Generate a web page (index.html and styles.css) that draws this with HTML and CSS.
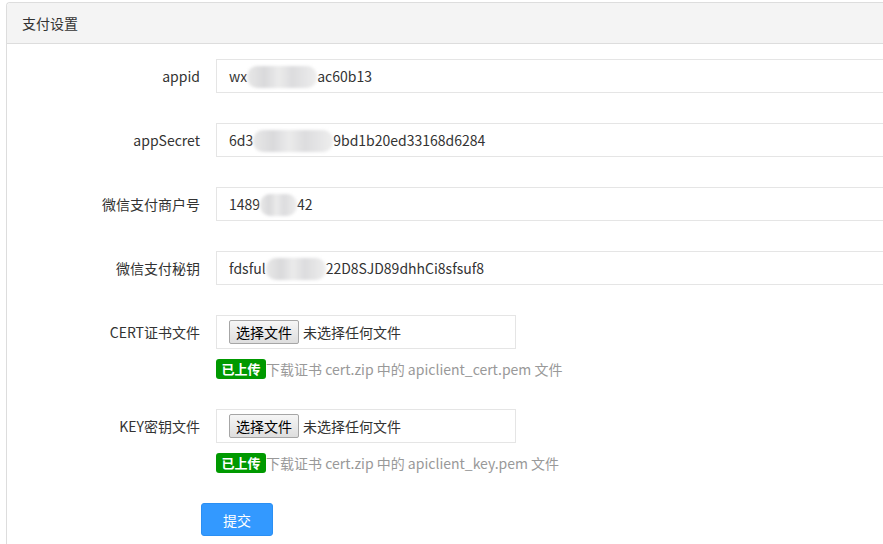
FILE: index.html
```html
<!DOCTYPE html>
<html lang="zh-CN">
<head>
<meta charset="utf-8">
<title>支付设置</title>
<link rel="stylesheet" href="styles.css">
</head>
<body>
<div class="page">
  <div class="panel">
    <div class="panel-head">支付设置</div>
    <div class="panel-body">
      <div class="row">
        <div class="label">appid</div>
        <div class="field"><div class="input">wx<span class="mask" style="width:70px"></span>ac60b13</div></div>
      </div>
      <div class="row">
        <div class="label">appSecret</div>
        <div class="field"><div class="input">6d3<span class="mask" style="width:80px"></span>9bd1b20ed33168d6284</div></div>
      </div>
      <div class="row">
        <div class="label">微信支付商户号</div>
        <div class="field"><div class="input">1489<span class="mask" style="width:37px"></span>42</div></div>
      </div>
      <div class="row">
        <div class="label">微信支付秘钥</div>
        <div class="field"><div class="input">fdsful<span class="mask" style="width:60px"></span>22D8SJD89dhhCi8sfsuf8</div></div>
      </div>
      <div class="row">
        <div class="label">CERT证书文件</div>
        <div class="field">
          <div class="filebox"><span class="filebtn">选择文件</span><span class="filename">未选择任何文件</span></div>
          <div class="help"><span class="badge">已上传</span>下载证书 cert.zip 中的 apiclient_cert.pem 文件</div>
        </div>
      </div>
      <div class="row">
        <div class="label">KEY密钥文件</div>
        <div class="field">
          <div class="filebox"><span class="filebtn">选择文件</span><span class="filename">未选择任何文件</span></div>
          <div class="help"><span class="badge">已上传</span>下载证书 cert.zip 中的 apiclient_key.pem 文件</div>
        </div>
      </div>
      <div class="actions"><button class="submit" type="button">提交</button></div>
    </div>
  </div>
</div>
</body>
</html>
```
FILE: styles.css
```css
html, body {
  margin: 0;
  padding: 0;
  background: #fff;
  overflow: hidden;
}
body {
  font-family: "Noto Sans CJK SC", "Noto Sans", sans-serif;
  font-size: 14px;
  color: #333;
}
.page {
  padding: 2px 0 0 6px;
  height: 542px;
  overflow: hidden;
}
.panel {
  width: 1000px;
  height: 600px;
  border: 1px solid #ddd;
  border-right: none;
  border-radius: 4px 0 0 0;
}
.panel-head {
  height: 40px;
  line-height: 40px;
  padding-left: 15px;
  background: #f4f4f4;
  border-bottom: 1px solid #ddd;
  border-radius: 4px 0 0 0;
}
.panel-body {
  padding-top: 15px;
}
.row {
  display: flex;
  margin-bottom: 30px;
}
.label {
  width: 193px;
  margin-right: 16px;
  text-align: right;
  line-height: 34px;
  height: 34px;
  flex: none;
}
.field {
  flex: 1;
}
.input {
  box-sizing: border-box;
  height: 34px;
  line-height: 32px;
  padding: 0 12px;
  border: 1px solid #e5e5e5;
  color: #333;
  white-space: nowrap;
}
.mask {
  display: inline-block;
  height: 22px;
  vertical-align: middle;
  margin-top: -3px;
  border-radius: 10px;
  background: linear-gradient(90deg, #e8e8e8 0%, #d9d9db 25%, #ebebeb 45%, #dcdcde 65%, #eeeeee 100%);
  filter: blur(1.5px);
}
.filebox {
  box-sizing: border-box;
  width: 300px;
  height: 34px;
  border: 1px solid #e5e5e5;
  padding: 6px 12px;
  display: flex;
  align-items: center;
}
.filebtn {
  box-sizing: border-box;
  height: 24px;
  line-height: 22px;
  padding: 0 6px;
  border: 1px solid #a6a6a6;
  border-radius: 2px;
  background: linear-gradient(#f6f6f6, #dedede);
  color: #000;
  margin-right: 4px;
}
.filename {
  color: #333;
}
.help {
  margin-top: 10px;
  height: 20px;
  line-height: 20px;
  color: #999;
  display: flex;
  align-items: center;
  white-space: nowrap;
}
.badge {
  display: inline-block;
  width: 50px;
  height: 20px;
  line-height: 20px;
  text-align: center;
  background: #009900;
  color: #fff;
  font-weight: bold;
  font-size: 13px;
  border-radius: 3px;
}
.actions {
  padding-left: 194px;
}
.submit {
  width: 72px;
  height: 33px;
  border: 1px solid #2b8ff3;
  border-radius: 3px;
  background: #3399ff;
  color: #fff;
  font-family: "Noto Sans CJK SC", "Noto Sans", sans-serif;
  font-size: 14px;
  padding: 0;
}
```
